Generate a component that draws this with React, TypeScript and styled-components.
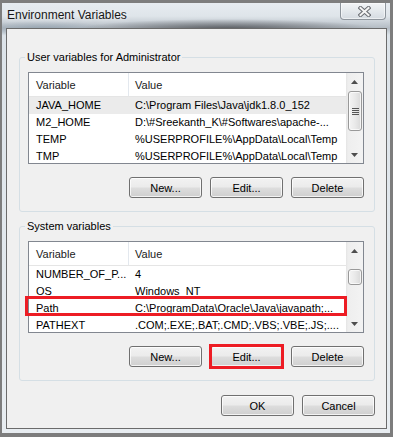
import React from "react";
import styled, { createGlobalStyle } from "styled-components";

const GlobalStyle = createGlobalStyle`
  html, body {
    margin: 0;
    padding: 0;
  }
  body {
    background: #7d7d7d;
    font-family: "Liberation Sans", Arial, sans-serif;
    font-size: 11px;
    color: #000;
  }
`;

const Screen = styled.div`
  width: 393px;
  height: 437px;
  box-sizing: border-box;
  padding: 3px 3px 4px 2px;
  background: #7d7d7d;
`;

const Frame = styled.div`
  height: 100%;
  box-sizing: border-box;
  display: flex;
  flex-direction: column;
  padding: 0 3px 4px 4px;
  background:
    radial-gradient(ellipse 150px 10px at 225px 26px, rgba(70, 72, 76, 0.85), rgba(70, 72, 76, 0) 100%) no-repeat,
    radial-gradient(ellipse 70px 8px at 40px 26px, rgba(140, 156, 170, 0.75), rgba(140, 156, 170, 0) 100%) no-repeat,
    linear-gradient(to bottom, #e6ebf0 0px, #dfe5ea 13px, #b4bcc4 25px, #dce3e9 32px, #e8edf1 100%);
`;

const TitleBar = styled.div`
  height: 25px;
  display: flex;
  align-items: flex-start;
  justify-content: space-between;
`;

const Title = styled.div`
  margin: 5px 0 0 1px;
  font-size: 12px;
  line-height: 14px;
  color: #161616;
  text-shadow: 0 0 6px rgba(255, 255, 255, 0.9);
`;

const CloseButton = styled.div`
  width: 46px;
  height: 17px;
  margin-right: 1px;
  box-sizing: border-box;
  border: 1px solid #8e959c;
  border-top: none;
  border-radius: 0 0 4px 4px;
  background: linear-gradient(to bottom, #f3f5f7, #e1e6ea 60%, #d5dbe1);
  box-shadow: inset 0 0 0 1px rgba(255, 255, 255, 0.55);
  display: flex;
  align-items: center;
  justify-content: center;
  padding-left: 3px;
`;

const Client = styled.div`
  flex: 1;
  display: flex;
  flex-direction: column;
  border: 1px solid #6b6b6b;
  background: #f0f0f0;
  padding: 21px 11px 12px 12px;
`;

const Group = styled.fieldset<{ $gap: number }>`
  margin: ${(p) => p.$gap}px 0 0;
  padding: 8px 10px 13px 8px;
  border: 1px solid #d5dfe5;
  border-radius: 3px;
  min-width: 0;
`;

const Caption = styled.legend`
  padding: 0 2px;
  margin-left: -3px;
  font-size: 11px;
  line-height: 14px;
`;

const ListView = styled.div`
  position: relative;
  height: 92px;
  box-sizing: border-box;
  border: 1px solid #828790;
  background: #fff;
  display: flex;
`;

const ListBody = styled.div`
  flex: 1;
  min-width: 0;
  overflow: hidden;
`;

const HeaderRow = styled.div`
  display: flex;
  height: 24px;
  box-sizing: border-box;
  border-bottom: 1px solid #e5e5e5;
`;

const HeaderCell = styled.div<{ $w?: number; $pad: number }>`
  ${(p) => (p.$w ? `width: ${p.$w}px; border-right: 1px solid #e3e8ee;` : "flex: 1;")}
  box-sizing: border-box;
  display: flex;
  align-items: center;
  padding-left: ${(p) => p.$pad}px;
  color: #1b1b1b;
`;

const Row = styled.div<{ $selected?: boolean }>`
  display: flex;
  height: 17px;
  align-items: center;
  background: ${(p) => (p.$selected ? "#ebebeb" : "transparent")};
`;

const Cell = styled.div<{ $w?: number; $pad: number }>`
  ${(p) => (p.$w ? `width: ${p.$w}px;` : "flex: 1;")}
  box-sizing: border-box;
  padding-left: ${(p) => p.$pad}px;
  white-space: nowrap;
  overflow: hidden;
  line-height: 17px;
`;

const ScrollBar = styled.div`
  width: 17px;
  flex: none;
  display: flex;
  flex-direction: column;
  background: linear-gradient(to right, #e4e4e4 0px, #eeeeee 2px, #f3f3f3 100%);
`;

const ArrowButton = styled.div`
  height: 17px;
  flex: none;
  display: flex;
  align-items: center;
  justify-content: center;
`;

const Track = styled.div`
  flex: 1;
`;

const Thumb = styled.div<{ $top: number; $h: number }>`
  margin: ${(p) => p.$top}px 1px 0 2px;
  height: ${(p) => p.$h}px;
  box-sizing: border-box;
  border: 1px solid #999999;
  border-radius: 3px;
  background: linear-gradient(to right, #f4f4f4, #e9e9e9 50%, #d9d9d9);
  box-shadow: inset 0 0 0 1px rgba(255, 255, 255, 0.7);
  display: flex;
  align-items: center;
  justify-content: center;
`;

const ButtonRow = styled.div<{ $top: number }>`
  display: flex;
  justify-content: flex-end;
  gap: 8px;
  margin-top: ${(p) => p.$top}px;
`;

const Button = styled.button`
  position: relative;
  width: 73px;
  height: 21px;
  box-sizing: border-box;
  padding: 0;
  border: 1px solid #707070;
  border-radius: 3px;
  background: linear-gradient(to bottom, #f2f2f2 0%, #ebebeb 48%, #dddddd 52%, #cfcfcf 100%);
  box-shadow: inset 0 0 0 1px rgba(255, 255, 255, 0.75);
  font-family: "Liberation Sans", Arial, sans-serif;
  font-size: 11px;
  color: #000;
`;

// red annotation boxes drawn over the dialog
const Mark = styled.span<{ $l: number; $t: number; $w?: number; $h?: number }>`
  position: absolute;
  left: ${(p) => p.$l}px;
  top: ${(p) => p.$t}px;
  ${(p) => (p.$w ? `width: ${p.$w}px;` : `right: ${p.$l}px;`)}
  ${(p) => (p.$h ? `height: ${p.$h}px;` : `bottom: ${p.$t}px;`)}
  box-sizing: border-box;
  border: 3px solid #ed1c24;
  pointer-events: none;
`;

const UpArrow = () => (
  <svg width="7" height="4" viewBox="0 0 7 4">
    <polygon points="0,4 3.5,0 7,4" fill="#4e4e4e" />
  </svg>
);

const DownArrow = () => (
  <svg width="7" height="4" viewBox="0 0 7 4">
    <polygon points="0,0 7,0 3.5,4" fill="#4e4e4e" />
  </svg>
);

const Grip = () => (
  <svg width="7" height="7" viewBox="0 0 7 7">
    {[0.5, 2.5, 4.5, 6.5].map((y) => (
      <line key={y} x1="0" y1={y} x2="7" y2={y} stroke="#555" strokeWidth="1" />
    ))}
  </svg>
);

const CloseGlyph = () => (
  <svg width="13" height="11" viewBox="0 0 13 11">
    <g strokeLinecap="square">
      <line x1="2.5" y1="2" x2="10.5" y2="9" stroke="#6a6d72" strokeWidth="4" />
      <line x1="10.5" y1="2" x2="2.5" y2="9" stroke="#6a6d72" strokeWidth="4" />
      <line x1="2.5" y1="2" x2="10.5" y2="9" stroke="#f5f5f5" strokeWidth="2" />
      <line x1="10.5" y1="2" x2="2.5" y2="9" stroke="#f5f5f5" strokeWidth="2" />
    </g>
  </svg>
);

type Variable = { name: string; value: string; selected?: boolean };

const userVars: Variable[] = [
  { name: "JAVA_HOME", value: "C:\\Program Files\\Java\\jdk1.8.0_152", selected: true },
  { name: "M2_HOME", value: "D:\\#Sreekanth_K\\#Softwares\\apache-..." },
  { name: "TEMP", value: "%USERPROFILE%\\AppData\\Local\\Temp" },
  { name: "TMP", value: "%USERPROFILE%\\AppData\\Local\\Temp" },
];

const systemVars: Variable[] = [
  { name: "NUMBER_OF_P...", value: "4" },
  { name: "OS", value: "Windows_NT" },
  { name: "Path", value: "C:\\ProgramData\\Oracle\\Java\\javapath;..." },
  { name: "PATHEXT", value: ".COM;.EXE;.BAT;.CMD;.VBS;.VBE;.JS;...." },
];

function VariableList({
  rows,
  thumbTop,
  thumbHeight,
  grip,
  children,
}: {
  rows: Variable[];
  thumbTop: number;
  thumbHeight: number;
  grip?: boolean;
  children?: React.ReactNode;
}) {
  return (
    <ListView>
      <ListBody>
        <HeaderRow>
          <HeaderCell $w={100} $pad={7}>Variable</HeaderCell>
          <HeaderCell $pad={6}>Value</HeaderCell>
        </HeaderRow>
        {rows.map((r) => (
          <Row key={r.name} $selected={r.selected}>
            <Cell $w={100} $pad={7}>{r.name}</Cell>
            <Cell $pad={6}>{r.value}</Cell>
          </Row>
        ))}
      </ListBody>
      <ScrollBar>
        <ArrowButton>
          <UpArrow />
        </ArrowButton>
        <Track>
          <Thumb $top={thumbTop} $h={thumbHeight}>
            {grip && <Grip />}
          </Thumb>
        </Track>
        <ArrowButton>
          <DownArrow />
        </ArrowButton>
      </ScrollBar>
      {children}
    </ListView>
  );
}

export default function App() {
  return (
    <>
      <GlobalStyle />
      <Screen>
        <Frame>
          <TitleBar>
            <Title>Environment Variables</Title>
            <CloseButton>
              <CloseGlyph />
            </CloseButton>
          </TitleBar>
          <Client>
            <Group $gap={0}>
              <Caption>User variables for Administrator</Caption>
              <VariableList rows={userVars} thumbTop={1} thumbHeight={40} grip />
              <ButtonRow $top={13}>
                <Button>New...</Button>
                <Button>Edit...</Button>
                <Button>Delete</Button>
              </ButtonRow>
            </Group>

            <Group $gap={7}>
              <Caption>System variables</Caption>
              <VariableList rows={systemVars} thumbTop={10} thumbHeight={16}>
                <Mark $l={-4} $t={54} $w={322} $h={20} />
              </VariableList>
              <ButtonRow $top={13}>
                <Button>New...</Button>
                <Button>
                  Edit...
                  <Mark $l={-2} $t={-3} />
                </Button>
                <Button>Delete</Button>
              </ButtonRow>
            </Group>

            <ButtonRow $top={14}>
              <Button>OK</Button>
              <Button>Cancel</Button>
            </ButtonRow>
          </Client>
        </Frame>
      </Screen>
    </>
  );
}
